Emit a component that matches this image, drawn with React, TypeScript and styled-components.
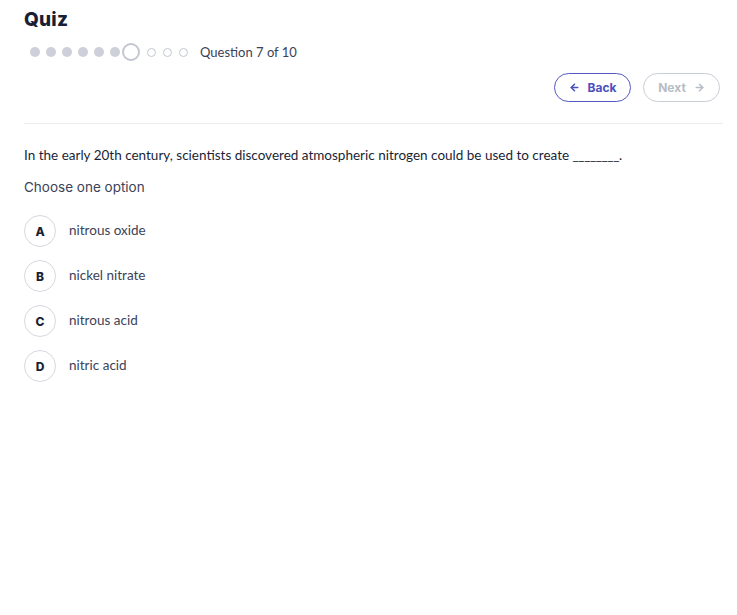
import styled, { createGlobalStyle } from "styled-components";
import { ArrowLeft, ArrowRight } from "lucide-react";

const GlobalStyle = createGlobalStyle`
  body {
    margin: 0;
    background: #ffffff;
    font-family: "Lato", "Liberation Sans", sans-serif;
  }
`;

const options = [
  { key: "A", label: "nitrous oxide" },
  { key: "B", label: "nickel nitrate" },
  { key: "C", label: "nitrous acid" },
  { key: "D", label: "nitric acid" },
];

const TOTAL = 10;
const CURRENT = 7;

export default function App() {
  return (
    <>
      <GlobalStyle />
      <QuizLayout>
        <Title>Quiz</Title>
        <Progress>
          <Dots>
            {Array.from({ length: TOTAL }, (_, i) => {
              const n = i + 1;
              const state =
                n < CURRENT ? "done" : n === CURRENT ? "current" : "todo";
              return <Dot key={n} $state={state} />;
            })}
          </Dots>
          <ProgressText>
            Question {CURRENT} of {TOTAL}
          </ProgressText>
        </Progress>
        <Actions>
          <NavButton $active>
            <ArrowLeft size={11} strokeWidth={3.4} />
            Back
          </NavButton>
          <NavButton disabled>
            Next
            <ArrowRight size={11} strokeWidth={3.4} />
          </NavButton>
        </Actions>
        <Divider />
        <Question>
          In the early 20th century, scientists discovered atmospheric nitrogen
          could be used to create <Blank>________</Blank>.
        </Question>
        <Prompt>Choose one option</Prompt>
        <OptionList>
          {options.map((o) => (
            <Option key={o.key}>
              <OptionBadge>{o.key}</OptionBadge>
              <OptionLabel>{o.label}</OptionLabel>
            </Option>
          ))}
        </OptionList>
      </QuizLayout>
    </>
  );
}

const QuizLayout = styled.main`
  display: flex;
  flex-direction: column;
  padding: 7px 14px 24px 24px;
`;

const Title = styled.h1`
  margin: 0;
  font-family: "Inter", "DejaVu Sans", sans-serif;
  font-size: 19px;
  font-weight: 800;
  line-height: 26px;
  color: #1a1f36;
  letter-spacing: 0.2px;
`;

const Progress = styled.div`
  display: flex;
  align-items: center;
  gap: 12px;
  margin-top: 8px;
  padding-left: 6px;
  height: 22px;
`;

const Dots = styled.div`
  display: flex;
  align-items: center;
  gap: 6px;
`;

const Dot = styled.span<{ $state: "done" | "current" | "todo" }>`
  box-sizing: border-box;
  border-radius: 50%;
  ${({ $state }) =>
    $state === "done"
      ? `width: 10px; height: 10px; background: #cdd0d8;`
      : $state === "current"
      ? `width: 18px; height: 18px; border: 2px solid #c3c7cf; margin: 0 0 0 -4px;`
      : `width: 9px; height: 9px; border: 1px solid #c3c7cf; margin-left: 1px;`}
`;

const ProgressText = styled.span`
  font-size: 13px;
  color: #3c4257;
`;

const Actions = styled.div`
  display: flex;
  justify-content: flex-end;
  gap: 12px;
  padding-right: 3px;
  margin-top: 10px;
`;

const NavButton = styled.button<{ $active?: boolean }>`
  display: inline-flex;
  align-items: center;
  justify-content: center;
  gap: 8px;
  box-sizing: border-box;
  width: 77px;
  height: 29px;
  border-radius: 15px;
  background: #ffffff;
  font-family: "Inter", "DejaVu Sans", sans-serif;
  font-size: 12px;
  font-weight: 700;
  border: 1px solid ${({ $active }) => ($active ? "#5358c4" : "#c9cdd5")};
  color: ${({ $active }) => ($active ? "#4a50bd" : "#b7bcc5")};
  cursor: pointer;
  &:disabled {
    cursor: default;
  }
`;

const Divider = styled.hr`
  margin: 21px 0 0;
  border: none;
  border-top: 1px solid #ebeef1;
`;

const Question = styled.p`
  margin: 22px 0 0;
  font-size: 13.5px;
  line-height: 18px;
  color: #1a1f36;
`;

const Blank = styled.span`
  letter-spacing: -0.4px;
`;

const Prompt = styled.p`
  margin: 14px 0 0;
  font-family: "Inter", "DejaVu Sans", sans-serif;
  font-size: 13.5px;
  line-height: 18px;
  color: #3c4257;
`;

const OptionList = styled.ul`
  list-style: none;
  margin: 19px 0 0;
  padding: 0;
  display: flex;
  flex-direction: column;
  gap: 13px;
`;

const Option = styled.li`
  display: flex;
  align-items: center;
  gap: 13px;
  cursor: pointer;
`;

const OptionBadge = styled.span`
  display: flex;
  align-items: center;
  justify-content: center;
  box-sizing: border-box;
  width: 32px;
  height: 32px;
  border-radius: 50%;
  border: 1px solid #d5d8de;
  font-family: "Inter", "DejaVu Sans", sans-serif;
  font-size: 12px;
  font-weight: 800;
  color: #1a1f36;
`;

const OptionLabel = styled.span`
  font-size: 13.5px;
  color: #3c4257;
  margin-top: -3px;
`;
